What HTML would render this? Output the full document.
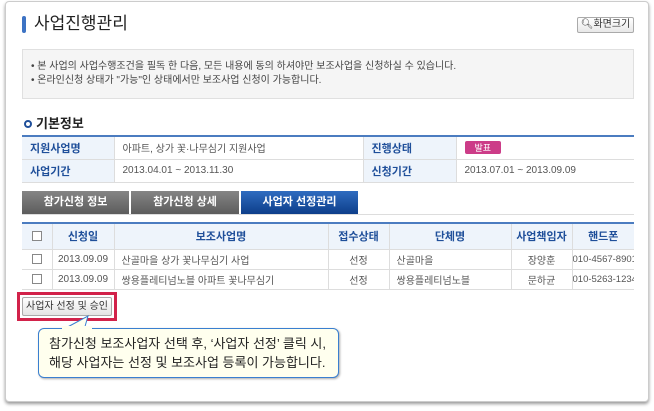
<!DOCTYPE html>
<html><head><meta charset="utf-8"><style>
*{margin:0;padding:0;box-sizing:border-box}
body{width:654px;height:411px;background:#fff;font-family:"Liberation Sans","Noto Sans CJK KR",sans-serif;position:relative;overflow:hidden;color:#333}
.card{position:absolute;left:5px;top:1px;width:644px;height:401px;border:1px solid #ccc;border-radius:4px;box-shadow:0 2px 3px #999;background:#fff}
.a{position:absolute}
.bar{left:22px;top:16px;width:4px;height:17px;background:#3d73c4;border-radius:2px}
h1{position:absolute;left:34px;top:13px;font-size:17px;font-weight:normal;color:#222;line-height:22px}
.zbtn{left:577px;top:17px;width:57px;height:16px;border:1px solid #aaa;border-radius:2px;background:linear-gradient(#fff,#e8e8e8);font-size:10px;line-height:14px;text-align:center}
.info{left:22px;top:49px;width:612px;height:50px;background:#f5f5f5;border:1px solid #e0e0e0;font-size:10px;color:#444;padding:10px 0 0 8px;line-height:14px}
.st{left:24px;top:113px;font-size:13px;font-weight:bold;color:#222}
.st i{display:inline-block;width:8px;height:8px;border:2px solid #1f4f9a;border-radius:50%;margin-right:4px}
table{position:absolute;border-collapse:collapse;font-size:10px}
.t1{left:22px;top:135px;width:612px;border-top:2px solid #4b7cc0}
.t1 td{height:23px;border-bottom:1px solid #ddd;border-right:1px solid #ddd;padding-left:8px;color:#555}
.t1 td.h{background:#eef4fb;color:#1f4f9a;font-weight:bold;font-size:11px}
.tag{display:inline-block;background:#cc3c88;color:#fff;font-size:9px;padding:0 10px;border-radius:2px}
.tab{top:191px;height:23px;color:#fff;font-size:11px;font-weight:bold;text-align:center;line-height:23px}
.tg{background:linear-gradient(#858585,#5c5c5c)}
.tb{background:linear-gradient(#2f6cc0,#0d3e8a)}
.tl{left:22px;top:214px;width:612px;height:1px;background:#ddd}
.t2{left:22px;top:222px;width:612px;border-top:2px solid #4b7cc0;table-layout:fixed}
.t2 td{border-bottom:1px solid #ddd;border-right:1px solid #ddd;height:20px;text-align:center;color:#555;white-space:nowrap;overflow:hidden}
.t2 tr.hd td{height:26px;background:#eef4fb;color:#1f4f9a;font-weight:bold;font-size:11px}
.t2 td.l{text-align:left;padding-left:7px}
.cb{display:inline-block;width:10px;height:10px;border:1px solid #888;background:#fff;vertical-align:middle}
.red{left:17px;top:292px;width:100px;height:29px;border:3px solid #d2224a}
.sbtn{left:22px;top:297px;width:90px;height:19px;border:1px solid #aaa;border-radius:2px;background:linear-gradient(#fff,#e4e4e4);font-size:10px;line-height:17px;text-align:center}
.call{left:38px;top:328px;width:301px;height:50px;background:#ffffee;border:1px solid #3a7fd0;border-radius:6px;box-shadow:1px 1px 2px #aaa;font-size:13px;line-height:19px;padding:5px 0 0 10px;color:#222;white-space:nowrap}
</style></head><body>
<div class="card"></div>
<div class="a bar"></div>
<h1>사업진행관리</h1>
<div class="a zbtn">🔍︎화면크기</div>
<div class="a info">• 본 사업의 사업수행조건을 필독 한 다음, 모든 내용에 동의 하셔야만 보조사업을 신청하실 수 있습니다.<br>• 온라인신청 상태가 "가능"인 상태에서만 보조사업 신청이 가능합니다.</div>
<div class="a st"><i></i>기본정보</div>
<table class="t1"><tr><td class="h" style="width:92px">지원사업명</td><td style="width:249px">아파트, 상가 꽃·나무심기 지원사업</td><td class="h" style="width:93px">진행상태</td><td style="border-right:0"><span class="tag">발표</span></td></tr>
<tr><td class="h">사업기간</td><td>2013.04.01 ~ 2013.11.30</td><td class="h">신청기간</td><td style="border-right:0">2013.07.01 ~ 2013.09.09</td></tr></table>
<div class="a tab tg" style="left:22px;width:107px">참가신청 정보</div>
<div class="a tab tg" style="left:131px;width:108px">참가신청 상세</div>
<div class="a tab tb" style="left:241px;width:117px">사업자 선정관리</div>
<div class="a tl"></div>
<table class="t2"><colgroup><col style="width:30px"><col style="width:62px"><col style="width:214px"><col style="width:61px"><col style="width:122px"><col style="width:61px"><col style="width:62px"></colgroup>
<tr class="hd"><td><span class="cb"></span></td><td>신청일</td><td>보조사업명</td><td>접수상태</td><td>단체명</td><td>사업책임자</td><td style="border-right:0">핸드폰</td></tr>
<tr><td><span class="cb"></span></td><td>2013.09.09</td><td class="l">산골마을 상가 꽃나무심기 사업</td><td>선정</td><td class="l">산골마을</td><td>장양훈</td><td style="border-right:0;text-align:left;font-size:9.5px">010-4567-8901</td></tr>
<tr><td><span class="cb"></span></td><td>2013.09.09</td><td class="l">쌍용플레티넘노블 아파트 꽃나무심기</td><td>선정</td><td class="l">쌍용플레티넘노블</td><td>문하균</td><td style="border-right:0;text-align:left;font-size:9.5px">010-5263-1234</td></tr></table>
<div class="a red"></div>
<div class="a sbtn">사업자 선정 및 승인</div>
<svg class="a" style="left:60px;top:313px" width="40" height="18"><path d="M2 17 L28 3 L24 17" fill="#ffffee" stroke="#3a7fd0"/></svg>
<div class="a call">참가신청 보조사업자 선택 후, ‘사업자 선정’ 클릭 시,<br>해당 사업자는 선정 및 보조사업 등록이 가능합니다.</div>
<svg class="a" style="left:62px;top:326px" width="30" height="4"><rect x="0" y="0" width="30" height="4" fill="#ffffee"/></svg>
</body></html>
